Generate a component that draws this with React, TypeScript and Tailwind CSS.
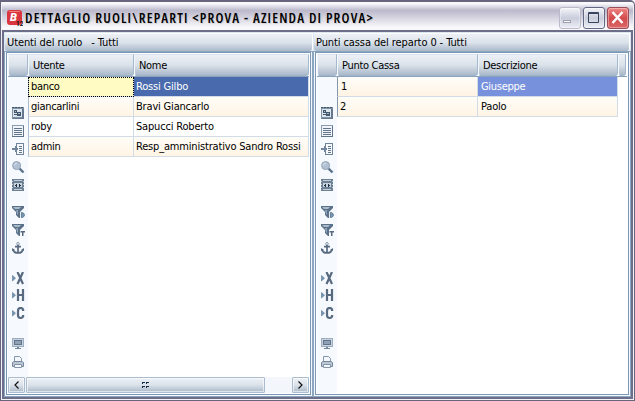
import type { ReactNode } from 'react';

const iconTops = [107, 125, 143, 161, 179, 206, 224, 242, 272, 289, 307, 338, 356];

function Glyph({ i }: { i: number }) {
  const d = '#586a80';
  const m = '#8496ab';
  const funnel = <><path fill="#5b7089" d="M0 0h12v2L8 6v6H7L4 9V6L0 2z" /><path fill="#a9bac9" d="M1 1h8L7 3H3z" /><path fill="#8fa5ba" d="M4 4h2v5L5 8z" /></>;
  const arrow = <path fill="#7896b1" stroke="#587795" strokeWidth=".6" d="m.5 3.5 3 2.7-3 2.8z" />;
  const shapes: ReactNode[] = [
    <g key="0" shapeRendering="crispEdges"><path fill="#7f91a5" d="M0 0h12v12H0z" /><path fill="#dce4ec" d="M1 2h9v8H1z" /><path fill="#44566b" d="M0 0h2v1H0zM3 0h2v1H3zM6 0h2v1H6zM9 0h2v1H9zM2 3h3v3H2zM2 7h3v1H2zM5 5h4v4H5z" /><path fill="#a9bac9" d="M6 6h2v1H6zM3 4h1v1H3z" /><path fill="#65788e" d="M10 2h2v10H1v-1h9z" /></g>,
    <g key="1" shapeRendering="crispEdges"><path fill="#8b9cb0" d="M0 0h12v12H0z" /><path fill="#f1f5f9" d="M1 1h10v10H1z" /><path fill="#61748a" d="M2 3h8v1H2zM2 5h8v1H2zM2 7h8v1H2zM2 9h8v1H2zM11 1h1v11H0v-1h11z" /></g>,
    <g key="2" shapeRendering="crispEdges"><path fill="#71849a" d="M4 0h8v12H4z" /><path fill="#f6f9fc" d="M5 1h6v10H5z" /><path fill="#61748a" d="M7 3h3v1H7zM7 5h3v1H7zM7 7h3v1H7zM7 9h3v1H7z" /><path fill="#71869c" d="M0 5h3V3h1v1h1v1h1v2H5v1H4v1H3V7H0z" /></g>,
    <g key="3"><path stroke="#59718a" strokeWidth="2.4" d="m7.5 7.5 4 4" /><circle cx="4.6" cy="4.6" r="4" fill="#b2c1d3" stroke="#92a2b5" /><path stroke="#dbe5ef" d="M2.3 4.5A2.4 2.4 0 0 1 5 2.2" fill="none" /></g>,
    <g key="4" shapeRendering="crispEdges"><path fill="#6d8094" d="M0 0h12v12H0z" /><path fill="#c3ced9" d="M2 1h8v1H2zM2 10h8v1H2zM0 2h1v1H0zM0 5h1v1H0zM0 8h1v1H0zM11 2h1v1h-1zM11 5h1v1h-1zM11 8h1v1h-1z" /><path fill="#c9d3dd" d="M2 4h8v4H2z" /><path fill="#1d2f40" d="M3 6h1V5h1v3H4V7H3zM9 6H8V5H7v3h1V7h1z" /></g>,
    <g key="5">{funnel}<path fill="#7d99b3" stroke="#496883" strokeWidth=".8" d="M9.4 6.5c4 0 4 5 0 5z" /></g>,
    <g key="6">{funnel}<path fill={d} d="M8.5 7H13v1.500h-1.500V12H10V8.500H8.500z" /></g>,
    <g key="7" fill="none" stroke={d} strokeWidth="1.7"><circle cx="6" cy="1.8" r="1.3" strokeWidth="1" stroke={m} /><path d="M6 3v8M3 4.7h6M1.2 7.5c.3 2 2 3.5 4.8 3.5s4.500-1.500 4.800-3.500" /><path fill={d} stroke="none" d="M0 9V6l3 2zM12 9V6L9 8z" /></g>,
    <g key="8">{arrow}<path fill="none" stroke={d} strokeWidth="2.2" d="m5.500 0 5.500 12M11 0 5.500 12" /></g>,
    <g key="9">{arrow}<path fill="none" stroke={d} strokeWidth="2.2" d="M6 0v12M11 0v12M6 6h5" /></g>,
    <g key="10">{arrow}<path fill="none" stroke={d} strokeWidth="2.2" d="M11.200 4C11.200 0 6 0 6 4v4c0 4 5.200 4 5.200 0" /></g>,
    <g key="11" shapeRendering="crispEdges"><path fill="#9badbf" d="M0 0h12v9H0z" /><path fill="#c8d3df" d="M1 1h10v7H1z" /><path fill="#60758a" d="M2 2h8v5H2z" /><path fill="#8fa2b5" d="M3 3h6v3H3z" /><path fill="#7588a0" d="M5 9h2v1h2v1H3v-1h2z" /></g>,
    <g key="12"><path fill="#f3f6fa" stroke={m} d="M2.500 6V.5h5l2 2V6" /><path fill="#bcc7d3" stroke="#74879c" d="m.5 6.500 1.500-1h8l1.500 1v4H.5z" /><path fill="#f4f6fa" stroke={m} d="M2.500 8.500h7v3h-7z" /></g>,
  ];
  return <svg width="13" height="13" viewBox="0 0 13 13" className="block shrink-0">{shapes[i]}</svg>;
}

function Tools() {
  return (
    <div className="w-[20px] shrink-0 bg-[#f6f9fd] pl-1">
      {iconTops.map((top, i) => (
        <div key={top} style={{ height: 13, marginTop: i === 0 ? top - 77 : top - iconTops[i - 1] - 13 }}>
          <Glyph i={i} />
        </div>
      ))}
    </div>
  );
}

const bar = 'bg-linear-to-b from-[#edf1f6] via-[#dbe2ea] to-[#aab9ca]';

function Head({ text = '', className }: { text?: string; className: string }) {
  return (
    <div className={`flex h-full shrink-0 items-center rounded-b-[3px] border border-t-[#d9e5f1] border-r-[#a4b9ce] border-b-[#9fb3c9] border-l-[#f4f8fb] pt-[2px] pl-1 tracking-[-0.3px] ${bar} ${className}`}>
      {text}
    </div>
  );
}

function Cell({ text, className }: { text: string; className: string }) {
  return <div className={`flex h-[20px] shrink-0 items-center border-r border-b border-[#d2dce7] ${className}`}>{text}</div>;
}

function Grid({ children }: { children: ReactNode }) {
  return (
    <div className="flex min-h-0 flex-1 flex-col border border-[#8da6c0] bg-[#f4f8fc] p-px pt-0">
      <div className="flex min-h-0 flex-1 flex-col border border-[#7c98b7] bg-white p-px">{children}</div>
    </div>
  );
}

const cream = 'bg-linear-to-b from-[#fffdf8] to-[#fff4e4]';
const scrollPart = `flex items-center justify-center rounded-[1px] border border-[#aabccd] shadow-[inset_0_0_0_1px_#ffffff99] ${bar}`;
const caption = `h-[18px] shrink-0 rounded-b-[3px] border-t border-r border-white pt-[2px] pl-[2px] whitespace-pre ${bar}`;

const users = [
  ['banco', 'Rossi Gilbo'],
  ['giancarlini', 'Bravi Giancarlo'],
  ['roby', 'Sapucci Roberto'],
  ['admin', 'Resp_amministrativo Sandro Rossi'],
];

export default function App() {
  return (
    <div className="flex h-[401px] w-[635px] flex-col overflow-hidden rounded-tr-[5px] border border-t-2 border-[#68657f] bg-[#f1f1f6] p-px pt-0 font-['DejaVu_Sans_Condensed','DejaVu_Sans',sans-serif] text-[11px] leading-[14px] text-black">
      <div className="flex h-[28px] shrink-0 items-center bg-linear-to-b from-[#fafafd] from-5% via-[#bbb9cb] via-30% to-[#f8f8fb] to-90% pr-1 pl-[5px]">
        <svg width="16" height="17" viewBox="0 0 16 17" className="mt-1">
          <rect width="15" height="15" rx="3" fill="#d9363f" />
          <path fill="#f27b7b" d="M2 1h11v1H2z" />
          <text x="3" y="11" fill="white" fontSize="11" fontWeight="900" fontStyle="italic" fontFamily="Roboto">B</text>
          <text x="9" y="16" fill="#111" fontSize="6.500" fontWeight="700" fontFamily="Roboto">12</text>
        </svg>
        <h1 className="mt-[3px] ml-[2px] w-[360px] text-[14px] font-semibold tracking-[1.17px] whitespace-nowrap font-['Open_Sans',sans-serif] font-stretch-semi-condensed [text-shadow:1px_1px_1px_#8884]">DETTAGLIO RUOLI\REPARTI &lt;PROVA - AZIENDA DI PROVA&gt;</h1>
        <div className="mt-[3px] ml-auto flex gap-[2px]">
          {[0, 1, 2].map(i => (
            <svg key={i} width="22" height="22" viewBox="0 0 22 22">
              <defs><linearGradient id={`b${i}`} x2="0" y2="1"><stop stopColor={i === 2 ? '#ef8b88' : '#f6f7fb'} /><stop offset=".5" stopColor={i === 2 ? '#d44b4c' : '#c9cddb'} /><stop offset="1" stopColor={i === 2 ? '#dc6868' : '#edf0f7'} /></linearGradient></defs>
              <rect x=".5" y=".5" width="21" height="21" rx="2.500" fill={`url(#b${i})`} stroke={i === 2 ? '#984d59' : i === 1 ? '#626783' : '#bbb9ca'} />
              <rect x="1.500" y="1.500" width="19" height="19" rx="2" fill="none" stroke="white" opacity=".35" />
              {i === 0 && <path d="M4 14.500h8" stroke="#9c9eae" strokeWidth="3" />}
              {i === 0 && <path d="M5 14.500h6" stroke="white" />}
              {i === 1 && <path d="M5.500 5.500h10v10h-10zM5 6.500h11" fill="none" stroke="#38435d" />}
              {i === 2 && <path d="m5.500 5 10 11m0-11-10 11" stroke="white" strokeWidth="2.500" />}
            </svg>
          ))}
        </div>
      </div>
      <div className="flex min-h-0 flex-1 border-2 border-[#6d6e89] bg-[#dce7f2] pt-px">
        <section className="flex w-[309px] shrink-0 flex-col">
          <div className={`ml-px tracking-[-0.1px] ${caption}`}>Utenti del ruolo   - Tutti</div>
          <Grid>
            <div className="flex h-[23px] shrink-0 border-b border-[#8ba3bc]">
              <Head className="w-[20px]" /><Head text="Utente" className="w-[106px]" /><Head text="Nome" className="w-[175px]" />
            </div>
            <div className="flex min-h-0 flex-1">
              <Tools />
              <div className="min-w-0 flex-1">
                {users.map(([login, name], i) => (
                  <div key={login} className={`flex ${i % 2 ? cream : ''}`}>
                    <Cell text={login} className={`w-[106px] border-l border-l-[#a9bdd1] pl-[2px] tracking-[-0.3px] ${i === 0 ? 'bg-[#fffbc2] outline outline-dotted -outline-offset-1 outline-black' : ''}`} />
                    <Cell text={name} className={`w-[175px] pl-[2px] tracking-[-0.18px] ${i === 0 ? 'bg-[#496bad] text-white' : ''}`} />
                  </div>
                ))}
              </div>
            </div>
            <div className="flex h-[16px] shrink-0 bg-[#f3f6fa]">
              <div className={`w-[17px] ${scrollPart}`}><svg width="7" height="8"><path d="m5.500.5-3.500 3.500 3.500 3.500" fill="none" stroke="#111" strokeWidth="1.200" /></svg></div>
              <div className={`ml-px w-[239px] ${scrollPart}`}><svg width="8" height="6"><path fill="#172c42" d="M0 0h3v1H1v1H0zM4 0h3v1H5v1H4zM0 4h3v1H1v1H0zM4 4h3v1H5v1H4z" /></svg></div>
              <div className={`ml-auto w-[17px] ${scrollPart}`}><svg width="7" height="8"><path d="m1.500.5 3.500 3.500-3.500 3.500" fill="none" stroke="#111" strokeWidth="1.200" /></svg></div>
            </div>
          </Grid>
        </section>
        <section className="flex min-w-0 flex-1 flex-col">
          <div className={`mr-px ml-px tracking-[-0.1px] ${caption}`}>Punti cassa del reparto 0 - Tutti</div>
          <Grid>
            <div className="flex h-[23px] shrink-0 border-b border-[#8ba3bc]">
              <Head className="w-[20px]" /><Head text="Punto Cassa" className="w-[141px]" /><Head text="Descrizione" className="w-[140px]" /><Head className="w-[8px]" />
            </div>
            <div className="flex min-h-0 flex-1">
              <Tools />
              <div className="min-w-0 flex-1">
                <div className="flex"><Cell text="1" className={`w-[141px] border-l border-l-[#8398af] pl-[3px] ${cream}`} /><Cell text="Giuseppe" className="w-[140px] bg-[#7891dd] pl-[3px] tracking-[-0.3px] text-white" /></div>
                <div className={`flex w-[281px] ${cream}`}><Cell text="2" className="w-[141px] border-l border-l-[#8398af] pl-[2px]" /><Cell text="Paolo" className="w-[140px] pl-[3px] tracking-[-0.2px]" /></div>
              </div>
            </div>
          </Grid>
        </section>
      </div>
    </div>
  );
}
